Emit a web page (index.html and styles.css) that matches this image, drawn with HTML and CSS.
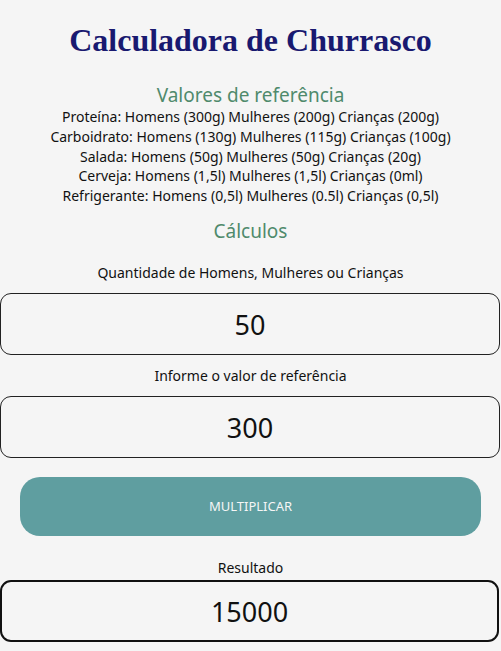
FILE: index.html
```html
<!DOCTYPE html>
<html lang="pt-BR">
<head>
<meta charset="utf-8">
<title>Calculadora de Churrasco</title>
<link rel="stylesheet" href="styles.css">
</head>
<body>
<main class="page">
  <h1 class="title">Calculadora de Churrasco</h1>
  <section class="refs">
    <h2 class="subtitle">Valores de referência</h2>
    <p class="ref-line">Proteína: Homens (300g) Mulheres (200g) Crianças (200g)</p>
    <p class="ref-line">Carboidrato: Homens (130g) Mulheres (115g) Crianças (100g)</p>
    <p class="ref-line">Salada: Homens (50g) Mulheres (50g) Crianças (20g)</p>
    <p class="ref-line">Cerveja: Homens (1,5l) Mulheres (1,5l) Crianças (0ml)</p>
    <p class="ref-line">Refrigerante: Homens (0,5l) Mulheres (0.5l) Crianças (0,5l)</p>
  </section>
  <section class="calc">
    <h2 class="subtitle calc-title">Cálculos</h2>
    <label class="label label-first">Quantidade de Homens, Mulheres ou Crianças</label>
    <div class="field">50</div>
    <label class="label label-second">Informe o valor de referência</label>
    <div class="field">300</div>
    <div class="btn-wrap"><button class="btn">MULTIPLICAR</button></div>
    <label class="label label-result">Resultado</label>
    <div class="field field-result">15000</div>
  </section>
</main>
</body>
</html>
```
FILE: styles.css
```css
html, body {
  margin: 0;
  padding: 0;
  background: #f5f5f5;
}
.page {
  display: flex;
  flex-direction: column;
  font-family: "Noto Sans", "Open Sans", sans-serif;
  color: #111;
  text-align: center;
}
.title {
  font-family: "Liberation Serif", "Times New Roman", serif;
  font-weight: bold;
  font-size: 32px;
  color: #191970;
  margin: 21px 0 0;
  line-height: 38px;
}
.refs {
  display: flex;
  flex-direction: column;
  margin-top: 24px;
}
.subtitle {
  font-weight: normal;
  font-size: 19px;
  color: #4f8a6c;
  margin: 0;
  line-height: 24px;
}
.ref-line {
  margin: 0;
  font-size: 14px;
  line-height: 19.8px;
}
.calc {
  display: flex;
  flex-direction: column;
}
.calc-title {
  margin-top: 13px;
}
.label {
  font-size: 14px;
  line-height: 20px;
  margin: 0;
}
.label-first {
  margin: 20px 0 10px;
}
.label-second {
  margin: 11px 0 10px;
}
.label-result {
  margin: 22px 0 2px;
}
.field {
  box-sizing: border-box;
  height: 62px;
  border: 1px solid #222;
  border-radius: 11px;
  font-size: 27px;
  line-height: 62px;
  margin: 0 1px 0 0;
}
.field-result {
  border: 2px solid #111;
  line-height: 60px;
  margin-right: 2px;
}
.btn-wrap {
  display: flex;
  padding: 19px 20px 0 20px;
}
.btn {
  flex: 1;
  height: 59px;
  border: none;
  border-radius: 20px;
  background: #5f9ea0;
  color: #f6f6f6;
  font-family: "Noto Sans", "Open Sans", sans-serif;
  font-size: 13px;
}
```
